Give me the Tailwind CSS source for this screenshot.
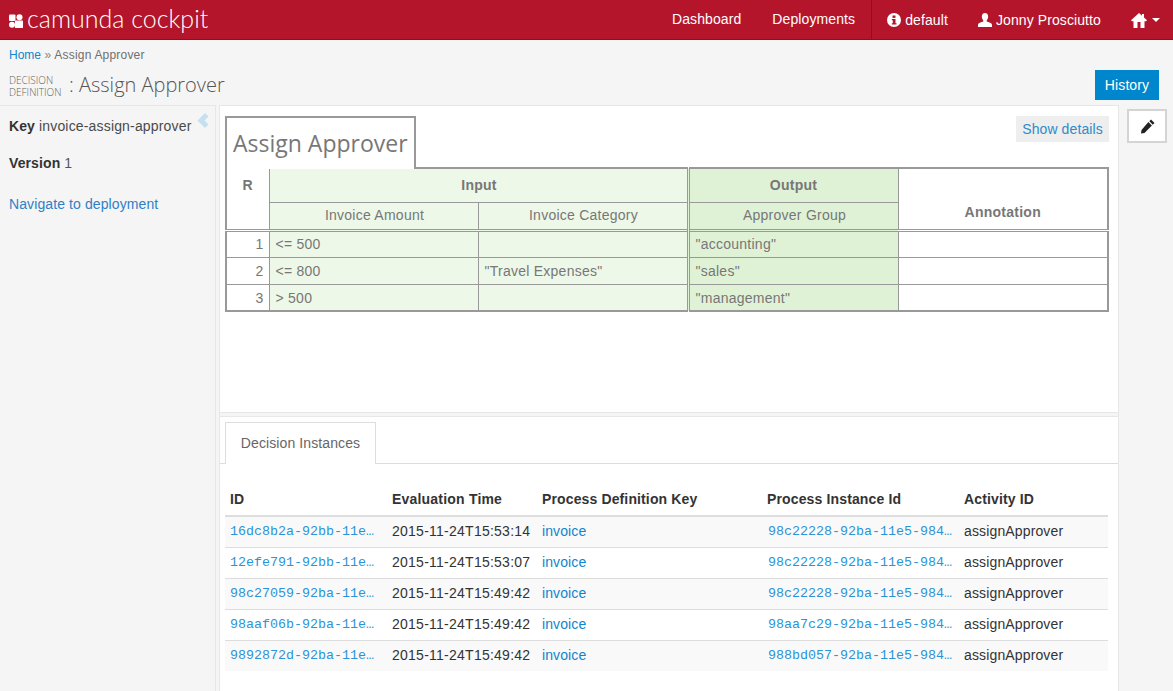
<!DOCTYPE html>
<html lang="en">
<head>
  <meta charset="UTF-8" />
  <title>camunda cockpit | Assign Approver</title>
  <script src="https://cdn.jsdelivr.net/npm/@tailwindcss/browser@4"></script>
</head>
<body class="bg-[#f5f5f5] font-['Liberation_Sans',sans-serif] text-[14px] text-[#333] tracking-[0.1px]">
  <div class="flex flex-col h-screen overflow-hidden">

    <!-- Top nav -->
    <header class="h-10 shrink-0 bg-[#b5152b] border-b border-[#8c1022] flex items-stretch text-white">
      <a href="#" class="flex items-center pl-[9px] flex-1">
        <svg width="14" height="14" viewBox="0 0 14 14" fill="#fff" class="mr-[4px] mt-[3px]">
          <rect x="0" y="0.500" width="6.500" height="6.500" rx="1"/>
          <circle cx="10.500" cy="3.200" r="3"/>
          <circle cx="3" cy="10.800" r="3"/>
          <rect x="6" y="6.500" width="8" height="7.500" rx="0.500"/>
        </svg>
        <span class="font-['Lato',sans-serif] font-light text-[25px] leading-none -mt-[2px] tracking-normal">camunda cockpit</span>
      </a>
      <a href="#" class="flex items-center px-[15px] -mt-[1px]">Dashboard</a>
      <a href="#" class="flex items-center px-[16px] -mt-[1px]">Deployments</a>
      <div class="w-px bg-[#8c1022]"></div>
      <a href="#" class="flex items-center pl-[15px] pr-[15px] gap-[4px] mt-[1px]">
        <svg width="14" height="14" viewBox="0 0 14 14"><circle cx="7" cy="7" r="7" fill="#fff"/><rect x="5.500" y="2.500" width="3" height="2.400" fill="#b5152b"/><path d="M4.800 6h3.700v4.200h1v1.300H4.800v-1.300h1V7.300h-1z" fill="#b5152b"/></svg>
        default
      </a>
      <a href="#" class="flex items-center pl-[15px] pr-[15px] gap-[4px] mt-[1px]">
        <svg width="14" height="14" viewBox="0 0 14 14" fill="#fff"><path d="M7 0c2 0 3.200 1.500 3.200 3.600 0 1.500-.7 3-1.500 3.800v1.200c1.600.6 5.300 1.300 5.300 3.400V14H0v-2c0-2.100 3.700-2.800 5.300-3.400V7.400C4.500 6.600 3.800 5.100 3.800 3.600 3.800 1.500 5 0 7 0z"/></svg>
        Jonny Prosciutto
      </a>
      <a href="#" class="flex items-center pl-[15px] pr-[13px] gap-[5px] w-[57px]">
        <svg width="16" height="15" viewBox="0 0 16 15" fill="#fff" class="shrink-0 mt-[1px]"><path fill-rule="evenodd" d="M8 0l3 2.700V1h2v3.500L16 7.300 15 8.300H13.500V15H2.500V8.300H1L0 7.300zM6.500 9v6h3V9z"/></svg>
        <span class="border-x-[4px] border-x-transparent border-t-[4px] border-t-white"></span>
      </a>
    </header>

    <!-- Breadcrumbs and page title -->
    <div class="h-[65px] shrink-0 pl-[9px] pr-[14px]">
      <div class="pt-[8px] text-[12px] leading-[14px] text-[#6f6f6f] tracking-[0.2px]"><a href="#" class="text-[#0f85cc] tracking-normal">Home</a> <span class="text-[#888]">»</span> Assign Approver</div>
      <div class="flex items-start justify-between mt-[8px]">
        <div class="flex items-center text-[#555] pt-[1px]">
          <div class="font-['Open_Sans',sans-serif] font-light text-[10px] leading-[12px] uppercase text-[#666] w-[60px] mt-[3px] tracking-normal">Decision<br>Definition</div>
          <div class="font-['Open_Sans',sans-serif] font-light text-[20px] leading-[26px] tracking-normal">: Assign Approver</div>
        </div>
        <a href="#" class="w-16 h-[30px] bg-[#0086cc] text-white flex items-center justify-center">History</a>
      </div>
    </div>

    <div class="flex-1 flex min-h-0">
      <!-- Sidebar -->
      <aside class="relative w-[216px] shrink-0 border-t border-r border-[#e7e7e7] pl-[9px] pt-[10px] leading-5">
        <div><span class="font-bold">Key</span> <span class="text-[#4a4a4a] tracking-[0.17px]">invoice-assign-approver</span></div>
        <div class="mt-[17px]"><span class="font-bold">Version</span> <span class="text-[#555]">1</span></div>
        <a href="#" class="block mt-[21px] text-[#2f7fc6]">Navigate to deployment</a>
        <svg class="absolute left-[197px] top-[7px]" width="12" height="15" viewBox="0 0 12 15" fill="#c5e0f1"><path d="M8 0l3.500 3.500L7.500 7.500l4 4L8 15 0.500 7.500z"/></svg>
      </aside>

      <!-- Main panes -->
      <main class="ml-[3px] w-[900px] shrink-0 bg-white border-t border-x border-[#e7e7e7] flex flex-col">
        <section class="h-[306px] shrink-0 pl-[5px] pr-[9px] pt-[10px] relative">
          <a href="#" class="absolute right-[9px] top-[10px] w-[93px] h-[26px] bg-[#eee] text-[#2f8bca] flex items-center justify-center">Show details</a>

          <div class="w-[191px] h-[53px] border-2 border-b-0 border-[#999] pl-[6px] font-['Open_Sans',sans-serif] text-[23px] leading-[50px] text-[#777] relative z-10 bg-white whitespace-nowrap tracking-normal">Assign Approver</div>

          <table class="table-fixed border-collapse w-[884px] border-2 border-[#999] text-[#777] -mt-[2px] tracking-[0.25px]">
            <colgroup>
              <col class="w-[43px]"><col class="w-[209px]"><col class="w-[210px]"><col class="w-[210px]"><col>
            </colgroup>
            <thead>
              <tr class="h-[34px]">
                <th rowspan="2" class="border border-[#999] align-top pt-[6px] font-bold">R</th>
                <th colspan="2" class="border border-[#999] border-r-[3px] border-double bg-[#eef8e8] font-bold pl-[2px]">Input</th>
                <th class="border border-[#999] bg-[#e0f2d6] font-bold">Output</th>
                <th rowspan="2" class="border border-[#999] font-bold align-bottom pb-[6px]">Annotation</th>
              </tr>
              <tr class="h-[28px] border-b-[3px] border-double border-[#999]">
                <td class="border-x border-t border-[#999] bg-[#eef8e8] text-center pl-[2px]">Invoice Amount</td>
                <td class="border-l border-t border-r-[3px] border-double border-[#999] bg-[#eef8e8] text-center pl-[2px]">Invoice Category</td>
                <td class="border-x border-t border-[#999] bg-[#e0f2d6] text-center pl-[2px]">Approver Group</td>
              </tr>
            </thead>
            <tbody>
              <tr class="h-[27px]">
                <td class="border border-[#999] text-right pr-[5px]">1</td>
                <td class="border border-[#999] bg-[#eef8e8] px-[6px]">&lt;= 500</td>
                <td class="border-y border-l border-r-[3px] border-double border-[#999] bg-[#eef8e8] px-[6px]"></td>
                <td class="border border-[#999] bg-[#e0f2d6] px-[6px]">"accounting"</td>
                <td class="border border-[#999]"></td>
              </tr>
              <tr class="h-[27px]">
                <td class="border border-[#999] text-right pr-[5px] pt-[1px]">2</td>
                <td class="border border-[#999] bg-[#eef8e8] px-[6px] pt-[1px]">&lt;= 800</td>
                <td class="border-y border-l border-r-[3px] border-double border-[#999] bg-[#eef8e8] px-[6px] pt-[1px]">"Travel Expenses"</td>
                <td class="border border-[#999] bg-[#e0f2d6] px-[6px] pt-[1px]">"sales"</td>
                <td class="border border-[#999]"></td>
              </tr>
              <tr class="h-[27px]">
                <td class="border border-[#999] text-right pr-[5px] pt-[2px]">3</td>
                <td class="border border-[#999] bg-[#eef8e8] px-[6px] pt-[2px]">&gt; 500</td>
                <td class="border-y border-l border-r-[3px] border-double border-[#999] bg-[#eef8e8] px-[6px] pt-[2px]"></td>
                <td class="border border-[#999] bg-[#e0f2d6] px-[6px] pt-[2px]">"management"</td>
                <td class="border border-[#999]"></td>
              </tr>
            </tbody>
          </table>
        </section>

        <!-- Splitter -->
        <div class="h-[5px] shrink-0 bg-[#f5f5f5] border-y border-[#e7e7e7]"></div>

        <section class="flex-1 pt-[5px]">
          <div class="border-b border-[#ddd] h-[42px] pl-[5px]">
            <div class="w-[151px] h-[42px] bg-white border border-b-0 border-[#ddd] text-[#666] flex items-center justify-center">Decision Instances</div>
          </div>

          <table class="table-fixed border-collapse w-[883px] ml-[5px] mt-[19px]">
            <colgroup>
              <col class="w-[162px]"><col class="w-[150px]"><col class="w-[225px]"><col class="w-[197px]"><col>
            </colgroup>
            <thead>
              <tr class="h-[33px] border-b-2 border-[#ddd] text-left">
                <th class="px-[5px] font-bold tracking-[0.15px]">ID</th>
                <th class="px-[5px] font-bold tracking-[0.2px]">Evaluation Time</th>
                <th class="px-[5px] font-bold tracking-[0.13px]">Process Definition Key</th>
                <th class="px-[5px] font-bold tracking-[0.14px]">Process Instance Id</th>
                <th class="px-[5px] font-bold tracking-[0.15px]">Activity ID</th>
              </tr>
            </thead>
            <tbody id="instanceRows"></tbody>
          </table>
        </section>
      </main>

      <!-- Right actions -->
      <div class="pl-[8px] pt-[4px]">
        <a href="#" class="w-10 h-[34px] bg-white border-2 border-[#d4d4d4] flex items-center justify-center">
          <svg width="15" height="15" viewBox="0 0 15 15" fill="#222"><path d="M11 .5 14.500 4l-1.700 1.700-3.500-3.500z"/><path d="M8.400 3.100l3.500 3.500L4.500 14 1 14.500 1.500 11z"/></svg>
        </a>
      </div>
    </div>
  </div>

  <script>
    const instances = [
      { id: '16dc8b2a-92bb-11e…', time: '2015-11-24T15:53:14', pi: '98c22228-92ba-11e5-984…' },
      { id: '12efe791-92bb-11e…', time: '2015-11-24T15:53:07', pi: '98c22228-92ba-11e5-984…' },
      { id: '98c27059-92ba-11e…', time: '2015-11-24T15:49:42', pi: '98c22228-92ba-11e5-984…' },
      { id: '98aaf06b-92ba-11e…', time: '2015-11-24T15:49:42', pi: '98aa7c29-92ba-11e5-984…' },
      { id: '9892872d-92ba-11e…', time: '2015-11-24T15:49:42', pi: '988bd057-92ba-11e5-984…' }
    ];

    document.getElementById('instanceRows').innerHTML = instances.map(row => `
      <tr class="h-[31px] border-b border-[#ddd] last:border-b-0 odd:bg-[#f9f9f9]">
        <td class="pl-[5px] whitespace-nowrap font-['Liberation_Mono',monospace] text-[13.33px] text-[#2a94d8] tracking-normal"><a href="#">${row.id}</a></td>
        <td class="px-[5px] tracking-[0.25px] whitespace-nowrap">${row.time}</td>
        <td class="px-[5px] text-[#0f85cc]"><a href="#">invoice</a></td>
        <td class="pl-[6px] whitespace-nowrap font-['Liberation_Mono',monospace] text-[13.33px] text-[#2a94d8] tracking-normal"><a href="#">${row.pi}</a></td>
        <td class="px-[5px] tracking-[0.14px]">assignApprover</td>
      </tr>
    `).join('');
  </script>
</body>
</html>
